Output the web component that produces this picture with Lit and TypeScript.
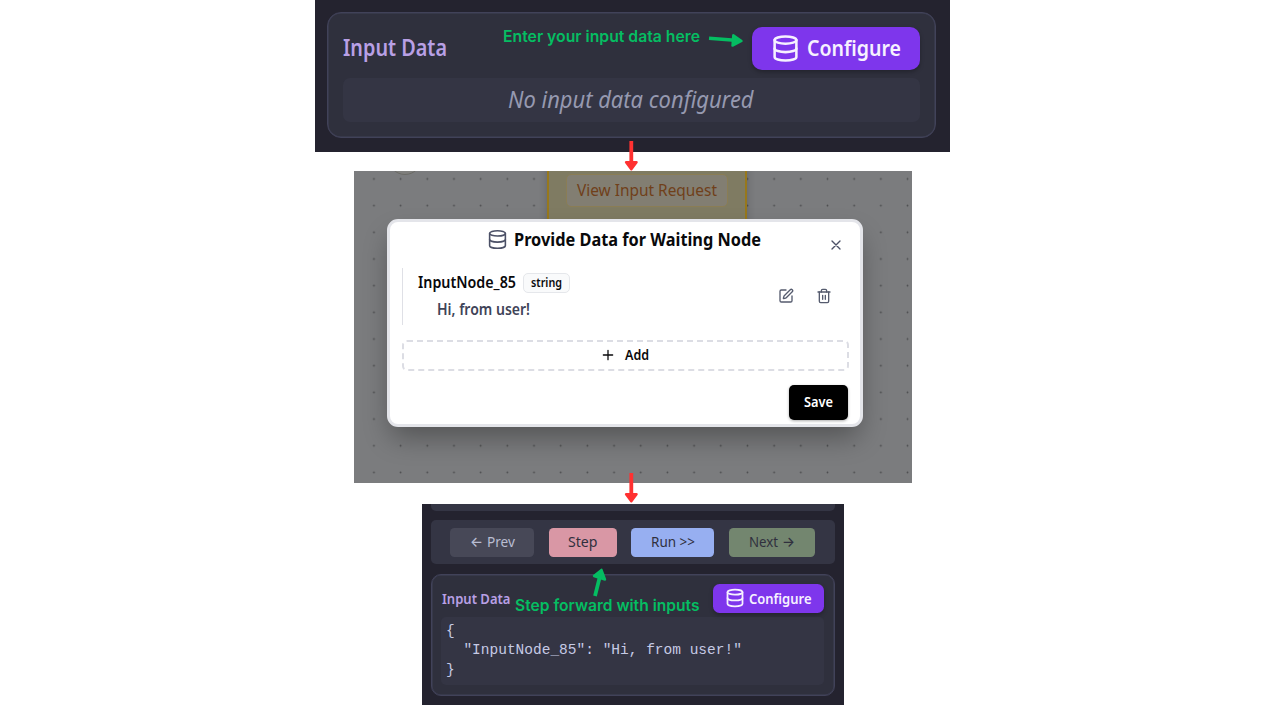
import { LitElement, html, svg, css } from "lit";
import { customElement, property } from "lit/decorators.js";

/** A single line of text set to an exact advance width. */
@customElement("fit-label")
class FitLabel extends LitElement {
  @property() text = "";
  @property({ type: Number }) size = 16;
  @property({ type: Number }) width = 100;
  static styles = css`
    :host { display: block; flex: none; line-height: 0; }
    svg { display: block; overflow: visible; }
    text { fill: currentColor; }
  `;
  render() {
    const h = Math.round(this.size * 1.25);
    return html`<svg width=${this.width} height=${h}>
      ${svg`<text x="0" y=${this.size} font-size=${this.size} textLength=${this.width} lengthAdjust="spacingAndGlyphs">${this.text}</text>`}
    </svg>`;
  }
}

const label = (text: string, width: number, size: number, cls = "") =>
  html`<fit-label class=${cls} .text=${text} .width=${width} .size=${size}></fit-label>`;

const icon = (size: number, stroke: number, body: unknown) => html`<svg
  class="icon" width=${size} height=${size} viewBox="0 0 24 24" fill="none" stroke="currentColor"
  stroke-width=${stroke} stroke-linecap="round" stroke-linejoin="round">${body}</svg>`;

const database = svg`<ellipse cx="12" cy="5" rx="9" ry="3"/><path d="M3 5v14a9 3 0 0 0 18 0V5"/><path d="M3 12a9 3 0 0 0 18 0"/>`;
const edit = svg`<path d="M12 3H5a2 2 0 0 0-2 2v14a2 2 0 0 0 2 2h14a2 2 0 0 0 2-2v-7"/><path d="M18.375 2.625a1 1 0 0 1 3 3l-9.013 9.014a2 2 0 0 1-.853.505l-2.873.84a.5.5 0 0 1-.62-.62l.84-2.873a2 2 0 0 1 .506-.852z"/>`;
const trash = svg`<path d="M3 6h18"/><path d="M19 6v14a2 2 0 0 1-2 2H7a2 2 0 0 1-2-2V6"/><path d="M8 6V4a2 2 0 0 1 2-2h4a2 2 0 0 1 2 2v2"/><path d="M10 11v6M14 11v6"/>`;
const cross = svg`<path d="M18 6 6 18M6 6l12 12"/>`;
const plus = svg`<path d="M5 12h14M12 5v14"/>`;

const shared = css`
  * { box-sizing: border-box; }
  .icon { display: block; flex: none; }
  .row { display: flex; }
  .dark { background: #24232f; overflow: hidden; }
  .card { background: #2f303d; border: 1px solid #414259; box-shadow: inset 0 0 0 .5px #414259; }
  .title { color: #b9a0e6; font-weight: 600; }
  .configure { display: flex; background: #7e36ec; color: #f6f1ff; font-weight: 600; box-shadow: 0 2px 4px #0004; }
  .well { background: #343544; }
`;

@customElement("empty-input-panel")
class EmptyInputPanel extends LitElement {
  static styles = [shared, css`
    :host { display: block; width: 635px; height: 152px; }
    .dark { height: 152px; padding: 11.5px 14px 0 12px; }
    .card { height: 126px; border-radius: 14px; padding: 14.5px 15px 0 15px; }
    .head { justify-content: space-between; height: 43px; }
    .title { margin-top: 6px; }
    .configure { width: 168px; height: 43px; border-radius: 10px; padding-left: 18.5px; }
    .configure .icon { margin-top: 6.5px; margin-right: 7.5px; }
    .configure fit-label { margin-top: 6.5px; }
    .well { height: 44px; margin-top: 8px; border-radius: 7px; padding: 7px 0 0 165px; color: #9699b0; font-style: italic; }
  `];
  render() {
    return html`<div class="dark"><section class="card">
      <div class="head row">${label("Input Data", 104, 22.5, "title")}
        <div class="configure">${icon(29, 2.1, database)}${label("Configure", 94, 22)}</div></div>
      <div class="well">${label("No input data configured", 245.5, 23)}</div>
    </section></div>`;
  }
}

@customElement("data-dialog-panel")
class DataDialogPanel extends LitElement {
  static styles = [shared, css`
    :host { display: block; width: 558px; height: 312px; }
    .canvas { position: relative; width: 558px; height: 312px; overflow: hidden; background: #7b7c7e; }
    .dots { position: absolute; inset: 0; width: 558px; height: 312px; }
    .node { position: absolute; left: 193px; top: -20px; width: 199.5px; height: 90px; background: #7f7b62; border: 2px solid #97781c; box-shadow: 0 1px 8px #0003; border-radius: 3px; }
    .request { width: 162px; height: 33px; margin: 21px 0 0 17px; background: #827e72; border: 1px solid #8a7d55; border-radius: 5px; padding: 5px 0 0 9.5px; color: #70401a; }
    .round { position: absolute; left: 34px; top: -30px; width: 34px; height: 34px; border-radius: 50%; border: 1px solid #6b6b66; background: #7f7f7d; }
    .dialog { position: absolute; left: 33px; top: 48px; width: 475.5px; height: 208px; background: #fff; border: 3px solid #e4e5ea; border-radius: 11px; box-shadow: 0 14px 28px -4px #0005; padding: 6.5px 11.5px 0 11.5px; color: #09090b; font-weight: 600; }
    .header { height: 39.5px; padding-left: 85.5px; }
    .header .icon { margin-top: .5px; margin-right: 6px; color: #4b5066; }
    .header fit-label { margin-top: -1px; }
    .header .close { margin: 7.5px 0 0 67px; color: #444; }
    .bold { font-weight: 700; }
    .entry { height: 57px; border-left: 1.5px solid #dfe0e6; padding: 0 16.5px 0 15px; justify-content: space-between; }
    .name { padding-top: 4.5px; gap: 7.5px; }
    .name > fit-label { margin-top: -.5px; }
    .badge { width: 46.5px; height: 20.5px; border: 1px solid #e5e7eb; border-radius: 5px; background: #f9fafb; padding: 1.5px 0 0 6.5px; }
    .value { margin: 6px 0 0 19px; color: #3f4458; }
    .actions { gap: 22px; padding-top: 20px; color: #555b6e; }
    .add { width: 447px; height: 31px; margin-top: 14.5px; border: 2px dashed #dcdde4; border-radius: 5px; padding: 4px 0 0 196.5px; gap: 9px; }
    .add .icon { margin-top: 1px; }
    .save { width: 59px; height: 34.5px; margin: 14.5px 0 0 387.5px; border-radius: 5px; background: #000; color: #fff; padding: 8px 0 0 15px; box-shadow: 0 1px 3px #0005; }
  `];
  render() {
    return html`<div class="canvas">
      <svg class="dots"><defs><pattern id="grid" x="6.6" y="-5.4" width="26.68" height="26.68" patternUnits="userSpaceOnUse">
        <circle cx="13.34" cy="13.34" r=".9" fill="#4b4c4e"/></pattern></defs><rect width="558" height="312" fill="url(#grid)"/></svg>
      <div class="round"></div>
      <div class="node"><div class="request">${label("View Input Request", 140, 16)}</div></div>
      <section class="dialog">
        <div class="header row bold">${icon(21, 1.8, database)}${label("Provide Data for Waiting Node", 247, 17.5)}
          <span class="close">${icon(16, 2, cross)}</span></div>
        <div class="entry row"><div>
            <div class="name row">${label("InputNode_85", 98, 15.5)}<div class="badge">${label("string", 31, 12)}</div></div>
            <div class="value">${label("Hi, from user!", 93, 15.5)}</div></div>
          <div class="actions row">${icon(16, 2, edit)}${icon(16, 2, trash)}</div></div>
        <div class="add row">${icon(16, 1.9, plus)}${label("Add", 24, 13.5)}</div>
        <div class="save">${label("Save", 29, 13.5)}</div>
      </section>
    </div>`;
  }
}

@customElement("step-panel")
class StepPanel extends LitElement {
  static styles = [shared, css`
    :host { display: block; width: 422px; height: 201px; }
    .dark { height: 201px; padding: 0 9.5px 0 9px; }
    .strip { height: 7px; background: #343544; border-radius: 0 0 5px 5px; }
    .toolbar { height: 44px; margin-top: 9px; background: #343544; border-radius: 5px; padding: 8px 0 0 19.3px; gap: 14.6px; }
    .btn { display: flex; height: 28.5px; border-radius: 4.5px; padding-top: 4px; color: #30303e; gap: 4px; }
    .arrow { font-family: Inter, sans-serif; font-weight: 500; }
    .prev { width: 84px; padding-left: 19.5px; background: #474857; color: #b9bdd2; }
    .step { width: 68px; padding-left: 19px; background: #d997a5; }
    .run { width: 83px; padding-left: 19.5px; background: #97aff1; }
    .next { width: 86px; padding-left: 20px; background: #73866f; }
    .card { height: 122px; margin-top: 9.5px; border-radius: 10px; padding: 9px 9.5px 9px 9px; }
    .head { justify-content: space-between; height: 29px; }
    .title { margin: 5px 0 0 .5px; }
    .configure { width: 111px; height: 29px; border-radius: 6.5px; padding-left: 11.5px; }
    .configure .icon { margin-top: 4.5px; margin-right: 4.5px; }
    .configure fit-label { margin-top: 5px; }
    .well { height: 68px; margin: 4.5px 0 0; border-radius: 5px; padding: 5px 0 0 5px; color: #c6cae4; font: 14.5px/19.4px "Liberation Mono", monospace; }
  `];
  render() {
    return html`<div class="dark"><div class="strip"></div>
      <div class="toolbar row">
        <div class="btn prev">${label("←", 13, 14.5, "arrow")}${label("Prev", 28, 15)}</div>
        <div class="btn step">${label("Step", 29.5, 15)}</div>
        <div class="btn run">${label("Run >>", 44, 15)}</div>
        <div class="btn next">${label("Next", 29, 15)}${label("→", 13, 14.5, "arrow")}</div>
      </div>
      <section class="card">
        <div class="head row">${label("Input Data", 68.5, 15, "title")}
          <div class="configure">${icon(20, 2.1, database)}${label("Configure", 62.5, 14.5)}</div></div>
        <pre class="well">{
  "InputNode_85": "Hi, from user!"
}</pre>
      </section></div>`;
  }
}

@customElement("app-root")
class AppRoot extends LitElement {
  static styles = css`
    :host { display: block; position: relative; width: 1267px; height: 708px; overflow: hidden; background: #fff; font-family: "Noto Sans", sans-serif; }
    .flow { display: flex; flex-direction: column; width: 1267px; }
    empty-input-panel { margin-left: 315px; }
    data-dialog-panel { margin: 19px 0 21px 354px; }
    step-panel { margin-left: 422px; }
    .note { position: absolute; color: #05bd62; font-family: Inter, sans-serif; font-weight: 600; }
    .enter { left: 503px; top: 26px; }
    .forward { left: 515px; top: 595px; }
    .arrows { position: absolute; inset: 0; width: 1267px; height: 708px; pointer-events: none; }
  `;
  down(y: number) {
    return svg`<g transform="translate(631.3 ${y})" stroke="#ff3131" fill="#ff3131" stroke-linejoin="round"><path d="M0 0V22" stroke-width="3.8"/><path d="M-5.2 21.3H5.2L0 28.3Z" stroke-width="2.5"/></g>`;
  }
  render() {
    return html`<main class="flow"><empty-input-panel></empty-input-panel><data-dialog-panel></data-dialog-panel><step-panel></step-panel></main>
      ${label("Enter your input data here", 197, 16, "note enter")}
      ${label("Step forward with inputs", 184.5, 16, "note forward")}
      <svg class="arrows">${this.down(141)}${this.down(473)}
        <g stroke="#05bd62" fill="#05bd62" stroke-linejoin="round">
          <path d="M709 38.2 735 40.3" stroke-width="3.6"/><path d="M733.3 35.2 732.5 45.6 741.5 41Z" stroke-width="2.4"/>
          <path d="M595 596 600 576" stroke-width="3.8"/><path d="M594 576 605 579.5 601.5 569.8Z" stroke-width="2.4"/>
        </g></svg>`;
  }
}
